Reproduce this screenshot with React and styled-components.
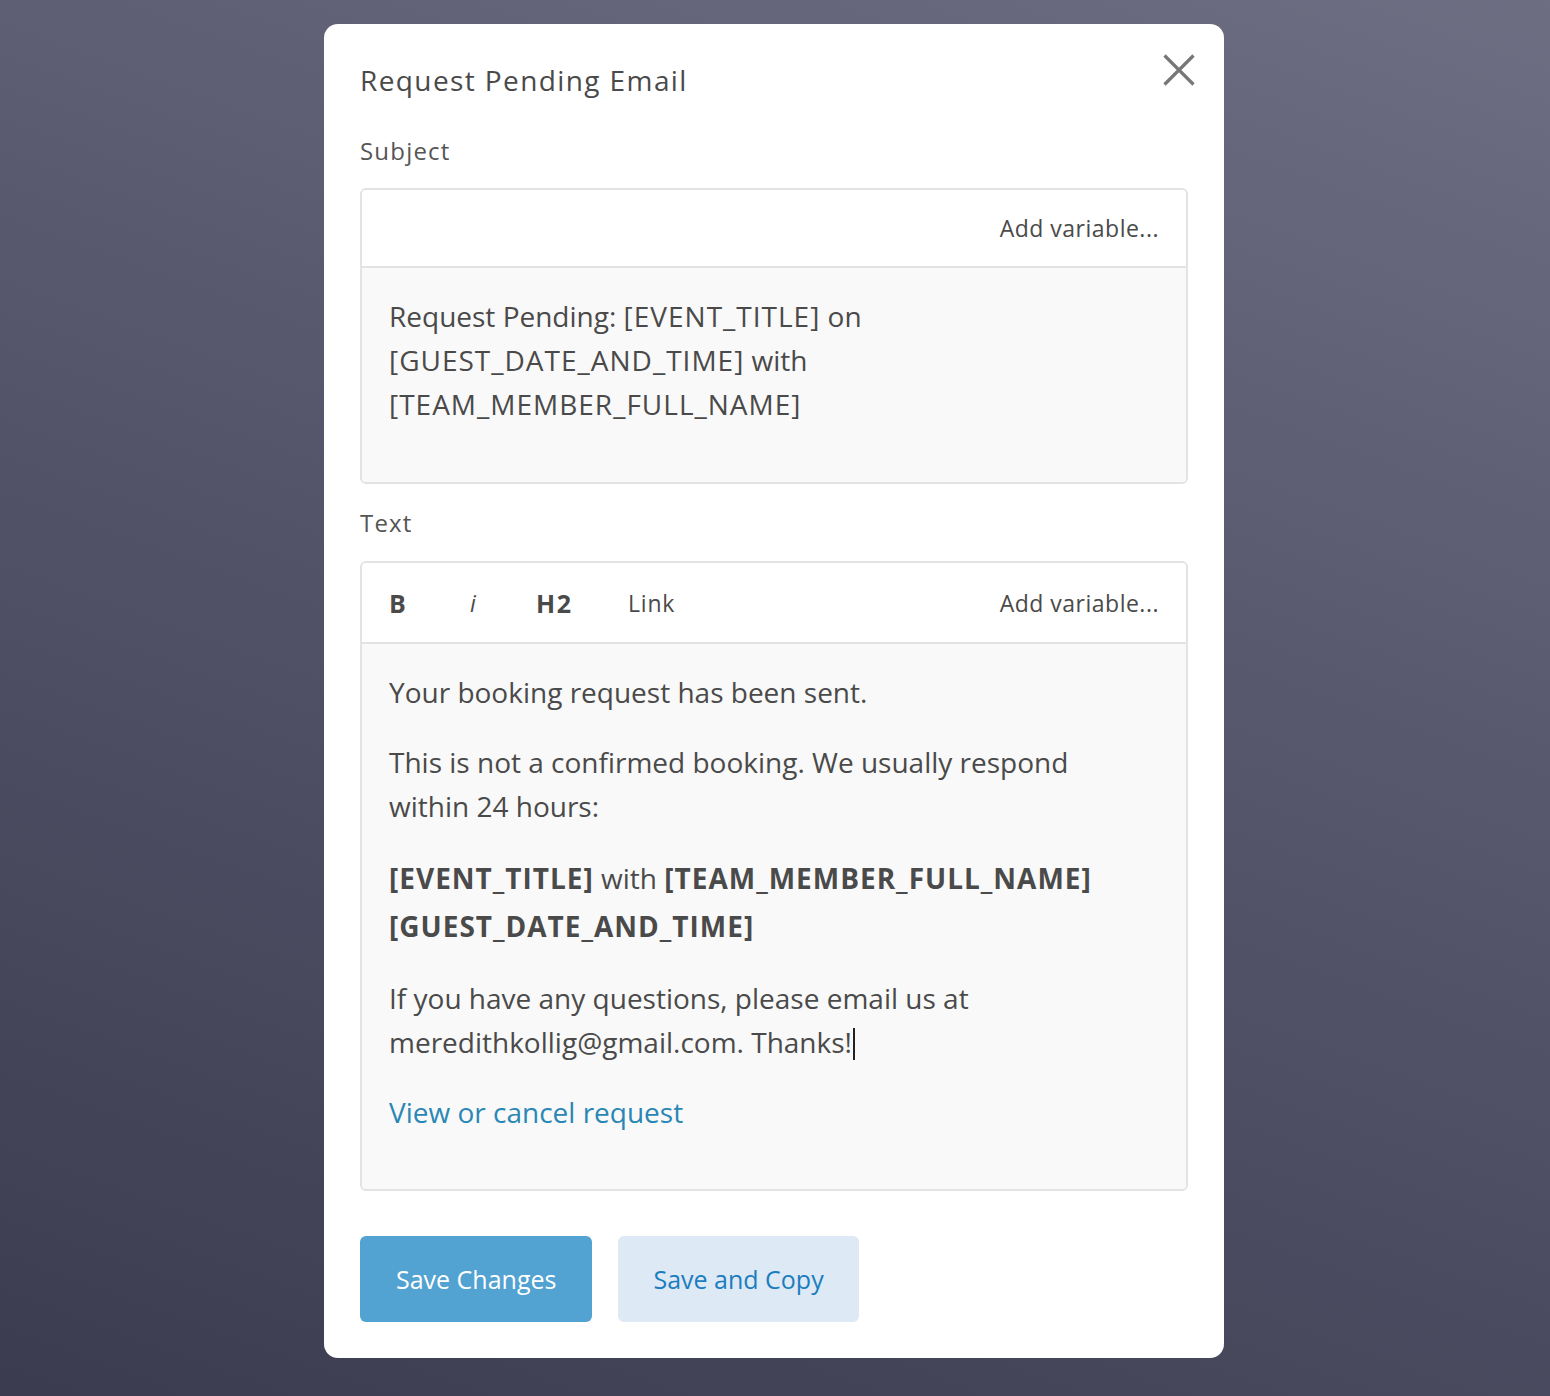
import React from "react";
import styled, { createGlobalStyle } from "styled-components";

const GlobalStyle = createGlobalStyle`
  html, body {
    margin: 0;
    padding: 0;
  }
  body {
    font-family: "Open Sans", "Liberation Sans", sans-serif;
    color: #4a4a4a;
  }
`;

const Backdrop = styled.div`
  min-height: 1396px;
  box-sizing: border-box;
  padding: 24px 2px 0 0;
  display: flex;
  justify-content: center;
  align-items: flex-start;
  background: linear-gradient(200deg, #6d6e82 0%, #55566b 45%, #3b3c4f 100%);
`;

const Modal = styled.div`
  position: relative;
  width: 900px;
  box-sizing: border-box;
  padding: 36px;
  background: #fff;
  border-radius: 14px;
`;

const Title = styled.h2`
  margin: 0;
  font-size: 28px;
  font-weight: 400;
  letter-spacing: 1.4px;
  line-height: 40px;
  color: #4a4a4a;
`;

const CloseButton = styled.button`
  all: unset;
  position: absolute;
  top: 30px;
  right: 29px;
  width: 32px;
  height: 32px;
  display: flex;
  cursor: pointer;
`;

const Label = styled.div`
  font-size: 24px;
  letter-spacing: 1.2px;
  line-height: 30px;
  color: #555;
  margin: ${(p) => p.$top}px 0 ${(p) => p.$bottom}px;
`;

const Editor = styled.div`
  border: 2px solid #e3e3e3;
  border-radius: 6px;
  overflow: hidden;
`;

const Toolbar = styled.div`
  height: ${(p) => p.$height}px;
  box-sizing: border-box;
  display: flex;
  align-items: center;
  padding: 0 27px;
  background: #fff;
  border-bottom: 2px solid #e3e3e3;
  color: #4a4a4a;
`;

const ToolButton = styled.span`
  width: ${(p) => p.$w}px;
  font-weight: ${(p) => (p.$bold ? 700 : 400)};
  font-style: ${(p) => (p.$italic ? "italic" : "normal")};
  font-size: ${(p) => (p.$bold ? 25 : 23)}px;
  letter-spacing: ${(p) => (p.$bold ? 1.5 : 0.8)}px;
  cursor: pointer;
`;

const AddVariable = styled.span`
  margin-left: auto;
  font-size: 23px;
  letter-spacing: 0.5px;
  color: #4a4a4a;
  cursor: pointer;
`;

const Body = styled.div`
  background: #f9f9f9;
  padding: ${(p) => p.$pad};
  font-size: 28px;
  line-height: 44px;
  color: #4a4a4a;
`;

const Para = styled.p`
  margin: 0 0 26px;
  line-height: ${(p) => p.$lh || 44}px;
  &:last-child {
    margin-bottom: 0;
  }
`;

const Token = styled.span`
  letter-spacing: 1px;
  font-weight: ${(p) => (p.$bold ? 700 : 400)};
`;

const Caret = styled.span`
  display: inline-block;
  width: 2px;
  height: 32px;
  margin-left: 1px;
  background: #222;
  vertical-align: -7px;
`;

const LinkText = styled.a`
  color: #2a87b5;
  text-decoration: none;
`;

const Actions = styled.div`
  display: flex;
  gap: 26px;
  margin-top: 45px;
`;

const Button = styled.button`
  all: unset;
  box-sizing: border-box;
  height: 86px;
  padding: 0 ${(p) => (p.$primary ? 36 : 35)}px;
  border-radius: 6px;
  font-family: "Open Sans", "Liberation Sans", sans-serif;
  font-size: 25px;
  display: flex;
  align-items: center;
  cursor: pointer;
  background: ${(p) => (p.$primary ? "#52a2d2" : "#dde9f4")};
  color: ${(p) => (p.$primary ? "#fff" : "#1b7dbf")};
`;

export default function App() {
  return (
    <>
      <GlobalStyle />
      <Backdrop>
        <Modal>
          <Title>Request Pending Email</Title>
          <CloseButton aria-label="Close">
            <svg width="32" height="32" viewBox="0 0 32 32">
              <path d="M1.5 1.5 L30.5 30.5 M30.5 1.5 L1.5 30.5" stroke="#777" strokeWidth="3.2" />
            </svg>
          </CloseButton>

          <Label $top={36} $bottom={22}>Subject</Label>
          <Editor>
            <Toolbar $height={78}>
              <AddVariable>Add variable...</AddVariable>
            </Toolbar>
            <Body $pad="26px 27px 56px">
              <Para>
                Request Pending: <Token>[EVENT_TITLE]</Token> on
                <br />
                <Token>[GUEST_DATE_AND_TIME]</Token> with
                <br />
                <Token>[TEAM_MEMBER_FULL_NAME]</Token>
              </Para>
            </Body>
          </Editor>

          <Label $top={24} $bottom={23}>Text</Label>
          <Editor>
            <Toolbar $height={81}>
              <ToolButton $w={81} $bold>B</ToolButton>
              <ToolButton $w={66} $italic>i</ToolButton>
              <ToolButton $w={92} $bold>H2</ToolButton>
              <ToolButton $w={80}>Link</ToolButton>
              <AddVariable>Add variable...</AddVariable>
            </Toolbar>
            <Body $pad="26px 27px 55px">
              <Para>Your booking request has been sent.</Para>
              <Para>
                This is not a confirmed booking. We usually respond
                <br />
                within 24 hours:
              </Para>
              <Para $lh={48}>
                <Token $bold>[EVENT_TITLE]</Token> with <Token $bold>[TEAM_MEMBER_FULL_NAME]</Token>
                <br />
                <Token $bold>[GUEST_DATE_AND_TIME]</Token>
              </Para>
              <Para>
                If you have any questions, please email us at
                <br />
                meredithkollig@gmail.com. Thanks!
                <Caret />
              </Para>
              <Para>
                <LinkText href="#">View or cancel request</LinkText>
              </Para>
            </Body>
          </Editor>

          <Actions>
            <Button $primary>Save Changes</Button>
            <Button>Save and Copy</Button>
          </Actions>
        </Modal>
      </Backdrop>
    </>
  );
}
